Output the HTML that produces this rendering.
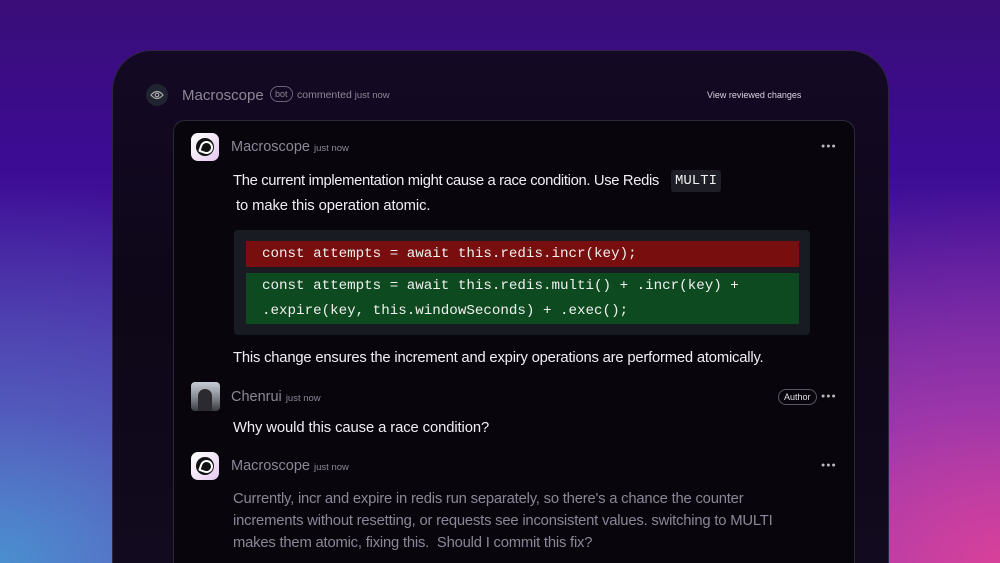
<!DOCTYPE html>
<html><head><meta charset="utf-8"><style>
*{margin:0;padding:0;box-sizing:border-box}
html,body{width:1000px;height:563px;overflow:hidden}
body{position:relative;font-family:"Liberation Sans",sans-serif;
background:
radial-gradient(ellipse 520px 380px at 0% 100%, #4a8fd0 0%, rgba(74,120,200,0.6) 40%, rgba(60,60,180,0) 100%),
radial-gradient(ellipse 520px 380px at 100% 100%, #d8409a 0%, rgba(200,60,170,0.6) 40%, rgba(120,40,180,0) 100%),
linear-gradient(180deg,#3a0d78 0%,#3c0c95 30%,#5a2aa8 70%,#7a40b0 100%);}
.panel{position:absolute;left:112px;top:50px;width:777px;height:513px;border-radius:40px 40px 0 0;
background:linear-gradient(180deg,#140924 0%,#0d0718 50%,#120a1e 100%);border:1px solid #2e2540;border-bottom:none}
.card{position:absolute;left:173px;top:120px;width:682px;height:443px;border-radius:12px 12px 0 0;background:#08050d;border:1px solid #2d2838;border-bottom:none}
.t{position:absolute;white-space:nowrap}
.name{font-size:14.5px;color:#8c8796}
.sm{font-size:9.5px;color:#8c8796}
.body{font-size:14.8px;color:#f1eff4;letter-spacing:-0.1px}
.dots{position:absolute;color:#bbb;font-size:7px;letter-spacing:1px}
.logo{position:absolute;width:28px;height:28px;border-radius:7px;background:linear-gradient(135deg,#fff 0%,#f1e6f6 50%,#e6c6f0 100%)}
.logo:after{content:"";position:absolute;left:5px;top:5px;width:18px;height:18px;border-radius:50%;background:#111}
.logo:before{content:"";position:absolute;left:9px;top:8px;width:9px;height:9px;border:2px solid #fff;border-radius:50% 50% 50% 10%;z-index:1;transform:rotate(20deg)}
.code{font-family:"Liberation Mono",monospace;font-size:14.2px;color:#f0f0f0}
</style></head><body>
<div class="panel"></div>
<div style="position:absolute;left:146px;top:84px;width:22px;height:22px;border-radius:50%;background:#202430"></div>
<svg style="position:absolute;left:150px;top:89px" width="14" height="12" viewBox="0 0 14 12"><path d="M1 6 Q7 -1 13 6 Q7 13 1 6Z" fill="none" stroke="#aaa" stroke-width="1.2"/><circle cx="7" cy="6" r="1.8" fill="none" stroke="#aaa" stroke-width="1.2"/></svg>
<div class="t name" style="left:182px;top:87px;font-size:15px">Macroscope</div>
<div class="t" style="left:270px;top:86px;height:16px;padding:0 4px;border:1px solid #6a6478;border-radius:8px;font-size:9px;color:#8c8796;line-height:14px">bot</div>
<div class="t sm" style="left:297px;top:89px;font-size:10.5px">commented <span style="font-size:9.5px">just now</span></div>
<div class="t" style="left:707px;top:90px;font-size:9px;color:#d8d4e0">View reviewed changes</div>

<div class="card"></div>
<div class="logo" style="left:191px;top:133px"></div>
<div class="t name" style="left:231px;top:139px">Macroscope <span class="sm">just now</span></div>
<div class="dots t" style="left:821px;top:143px">●●●</div>
<div class="t body" style="left:233px;top:173px;letter-spacing:-0.35px">The current implementation might cause a race condition. Use Redis</div>
<div class="t code" style="left:671px;top:170px;background:#1d1e26;border-radius:3px;padding:3px 4px;font-size:14px">MULTI</div>
<div class="t body" style="left:236px;top:198px">to make this operation atomic.</div>

<div style="position:absolute;left:234px;top:230px;width:576px;height:105px;background:#191b22;border-radius:4px"></div>
<div style="position:absolute;left:246px;top:241px;width:553px;height:26px;background:#780e0e"></div>
<div class="t code" style="left:262px;top:246px">const attempts = await this.redis.incr(key);</div>
<div style="position:absolute;left:246px;top:273px;width:553px;height:51px;background:#0e4a1f"></div>
<div class="t code" style="left:262px;top:278px">const attempts = await this.redis.multi() + .incr(key) +</div>
<div class="t code" style="left:262px;top:303px">.expire(key, this.windowSeconds) + .exec();</div>

<div class="t body" style="left:233px;top:350px;letter-spacing:-0.2px">This change ensures the increment and expiry operations are performed atomically.</div>

<div style="position:absolute;left:191px;top:382px;width:29px;height:29px;border-radius:4px;background:linear-gradient(180deg,#c8ccd4 0%,#8a8e96 50%,#3a3a40 100%)"></div>
<div style="position:absolute;left:198px;top:389px;width:14px;height:22px;border-radius:7px 7px 2px 2px;background:#2a2a30"></div>
<div class="t name" style="left:231px;top:389px">Chenrui <span class="sm">just now</span></div>
<div class="t" style="left:778px;top:389px;height:16px;padding:0 5px;border:1px solid #5a5666;border-radius:8px;font-size:9px;color:#e0dde6;line-height:14px">Author</div>
<div class="dots t" style="left:821px;top:393px">●●●</div>
<div class="t body" style="left:233px;top:420px">Why would this cause a race condition?</div>

<div class="logo" style="left:191px;top:452px"></div>
<div class="t name" style="left:231px;top:458px">Macroscope <span class="sm">just now</span></div>
<div class="dots t" style="left:821px;top:462px">●●●</div>
<div class="t body" style="left:233px;top:488px;color:#8c8796;line-height:22px;letter-spacing:-0.2px">Currently, incr and expire in redis run separately, so there's a chance the counter<br>increments without resetting, or requests see inconsistent values. switching to MULTI<br>makes them atomic, fixing this.&nbsp; Should I commit this fix?</div>
</body></html>
